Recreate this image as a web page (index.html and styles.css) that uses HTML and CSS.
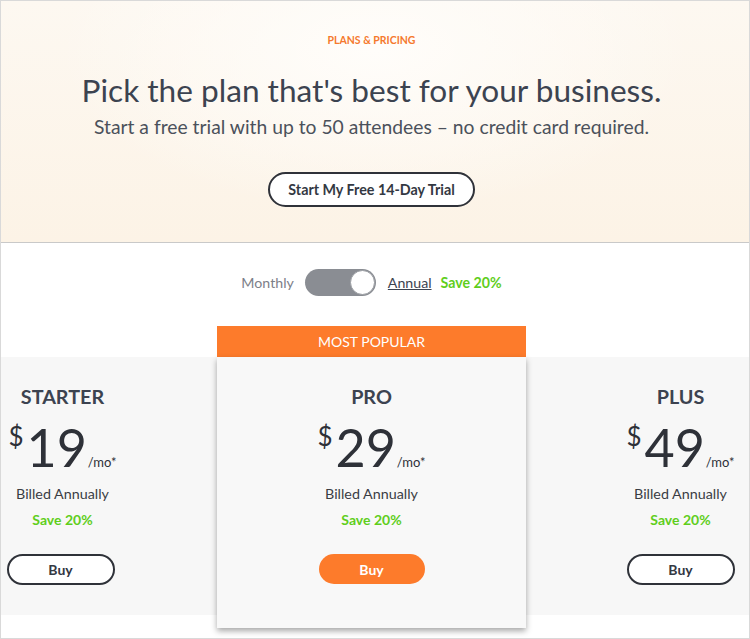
FILE: index.html
```html
<!DOCTYPE html>
<html lang="en">
  <head>
    <meta charset="UTF-8" />
    <meta name="viewport" content="width=device-width, initial-scale=1.0" />
    <title>Plans &amp; Pricing</title>
    <link rel="stylesheet" href="styles.css">
  </head>
  <body>
    <div class="page">
      <header class="hero">
        <p class="eyebrow">Plans &amp; Pricing</p>
        <h1>Pick the plan that's best for your business.</h1>
        <p class="lead">Start a free trial with up to 50 attendees – no credit card required.</p>
        <button class="trial">Start My Free 14-Day Trial</button>
      </header>

      <div class="billing">
        <span class="monthly">Monthly</span>
        <span class="switch"><span class="knob"></span></span>
        <a class="annual" href="#">Annual</a>
        <span class="save">Save 20%</span>
      </div>

      <div class="plans">
        <div class="plan">
          <h2>STARTER</h2>
          <div class="price"><sup>$</sup><span class="amount">19</span><span class="per">/mo*</span></div>
          <p class="billed">Billed Annually</p>
          <p class="save">Save 20%</p>
          <button class="buy">Buy</button>
        </div>
        <div class="plan popular">
          <div class="badge">MOST POPULAR</div>
          <div class="body">
            <h2>PRO</h2>
            <div class="price"><sup>$</sup><span class="amount">29</span><span class="per">/mo*</span></div>
            <p class="billed">Billed Annually</p>
            <p class="save">Save 20%</p>
            <button class="buy">Buy</button>
          </div>
        </div>
        <div class="plan">
          <h2>PLUS</h2>
          <div class="price"><sup>$</sup><span class="amount">49</span><span class="per">/mo*</span></div>
          <p class="billed">Billed Annually</p>
          <p class="save">Save 20%</p>
          <button class="buy">Buy</button>
        </div>
      </div>
    </div>
  </body>
</html>
```

FILE: styles.css
```css
* {
  margin: 0;
  padding: 0;
  box-sizing: border-box;
}

body {
  font-family: Lato, "Open Sans", sans-serif;
  color: #3c4350;
  background: #fff;
}

.page {
  width: 750px;
  height: 639px;
  border: 1px solid #d9d9d9;
  overflow: hidden;
}

.hero {
  height: 242px;
  padding: 32px 7px 0 0;
  text-align: center;
  border-bottom: 1px solid #c9c9c9;
  background:
    radial-gradient(ellipse at 50% 20%, #fffdfa 0%, rgba(255, 253, 250, 0) 60%),
    linear-gradient(180deg, #fdf8f1 0%, #fcf3e6 100%);
}

.eyebrow {
  font-size: 10.5px;
  line-height: 14px;
  font-weight: 700;
  color: #f5792e;
  text-transform: uppercase;
}

.hero h1 {
  margin-top: 23px;
  font-size: 31.6px;
  line-height: 40px;
  font-weight: 400;
  color: #3c4350;
}

.lead {
  margin-top: 4px;
  font-size: 19.3px;
  line-height: 26px;
  color: #4b515b;
}

.trial {
  margin-top: 32px;
  height: 35px;
  padding: 0 18px;
  border: 2px solid #2f3239;
  border-radius: 18px;
  background: #fff;
  font-family: inherit;
  font-size: 14.3px;
  font-weight: 700;
  color: #333842;
}

.billing {
  margin-top: 25px;
  padding-right: 7px;
  display: flex;
  justify-content: center;
  align-items: center;
  gap: 11px;
  font-size: 14.2px;
  height: 28px;
}

.monthly {
  color: #7c8088;
}

.switch {
  width: 71px;
  height: 27px;
  border-radius: 14px;
  background: #8a8d93;
  display: flex;
  justify-content: flex-end;
  align-items: center;
  padding-right: 1px;
}

.knob {
  width: 25px;
  height: 25px;
  border-radius: 50%;
  background: #fff;
  border: 1px solid #9a9da2;
}

.annual {
  color: #3c4350;
  text-decoration: underline;
  margin-left: 1px;
  margin-right: -2px;
}

.save {
  color: #5fce1c;
  font-weight: 700;
}

.plans {
  margin-top: 30px;
  padding-right: 7px;
  display: flex;
  justify-content: center;
  align-items: flex-start;
}

.plan {
  flex: 0 0 309px;
  margin-top: 31px;
  height: 258px;
  padding-top: 27px;
  background: #f7f7f7;
  text-align: center;
}

.plan h2 {
  font-size: 19.8px;
  line-height: 24px;
  font-weight: 700;
  color: #3c4350;
}

.price {
  margin-top: 13px;
  height: 52px;
  display: flex;
  justify-content: center;
  align-items: baseline;
  color: #2e3138;
}

.price sup {
  font-size: 26px;
  line-height: 25px;
  align-self: flex-start;
  margin-top: 3px;
  margin-right: 3px;
}

.amount {
  font-size: 52px;
  line-height: 52px;
}

.per {
  font-size: 13px;
  margin-left: 1px;
}

.billed {
  margin-top: 11px;
  font-size: 14.3px;
  line-height: 20px;
  color: #3a3d44;
}

.plan .save {
  margin-top: 6px;
  font-size: 14px;
  line-height: 20px;
}

.buy {
  margin-top: 24px;
  width: 108px;
  height: 31px;
  border: 2px solid #2f3239;
  border-radius: 16px;
  background: #fff;
  font-family: inherit;
  font-size: 14px;
  font-weight: 700;
  color: #333842;
}

.plans > .plan:first-child .buy {
  margin-left: -4px;
}

.plan.popular {
  margin-top: 0;
  height: auto;
  padding-top: 0;
  background: none;
  position: relative;
  z-index: 1;
}

.badge {
  height: 31px;
  line-height: 31px;
  background: #fd7b2b;
  color: #fff;
  font-size: 14px;
  font-weight: 400;
}

.popular .body {
  height: 271px;
  padding-top: 27px;
  background: #f8f8f8;
  box-shadow: 0 3px 6px rgba(0, 0, 0, 0.35);
}

.popular .buy {
  width: 106px;
  height: 30px;
  border: none;
  background: #fd7b2b;
  color: #fff;
}
```
